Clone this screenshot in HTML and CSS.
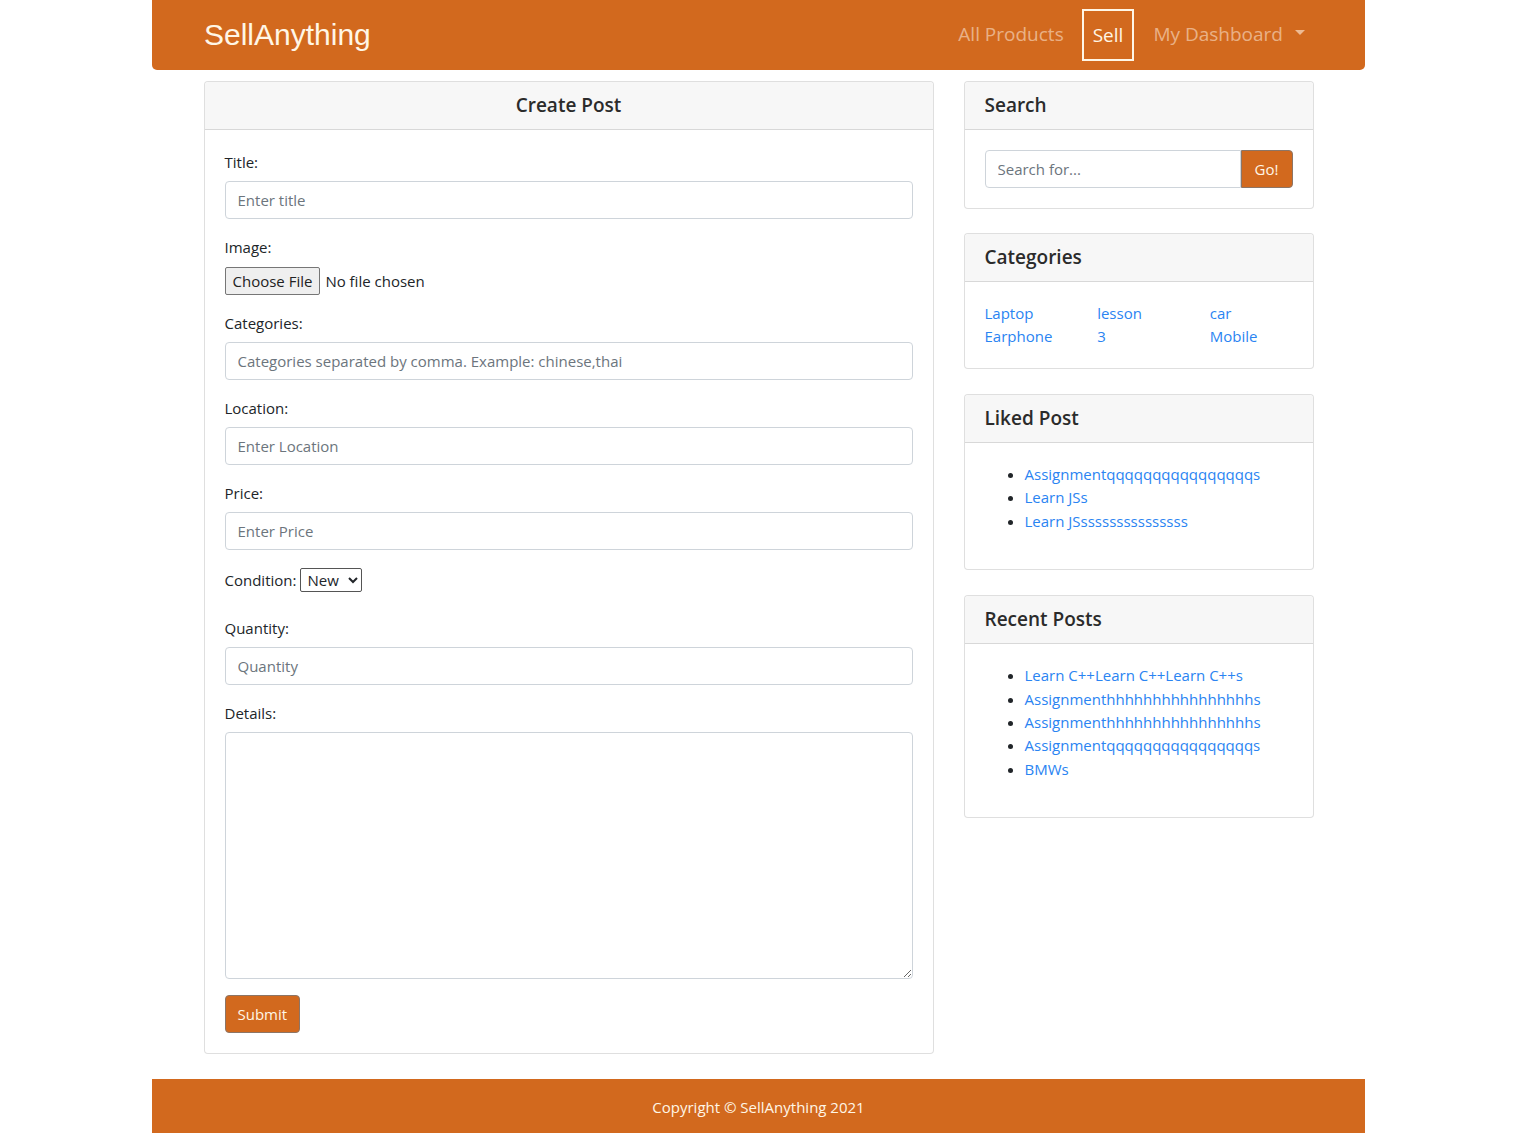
FILE: index.html
```html
<!DOCTYPE html>
<html lang="en">
<head>
<meta charset="utf-8">
<title>SellAnything - Create Post</title>
<link rel="stylesheet" href="styles.css">
</head>
<body>
<nav class="navbar">
  <a class="brand" href="#">SellAnything</a>
  <ul class="nav">
    <li><a class="nav-link" href="#">All Products</a></li>
    <li><a class="nav-link active" href="#">Sell</a></li>
    <li><a class="nav-link dropdown" href="#">My Dashboard <span class="caret"></span></a></li>
  </ul>
</nav>

<main class="container">
  <section class="col-main">
    <div class="card">
      <h5 class="card-header center">Create Post</h5>
      <form class="card-body">
        <div class="form-group">
          <label>Title:</label>
          <input class="form-control" type="text" placeholder="Enter title">
        </div>
        <div class="form-group">
          <label>Image:</label>
          <input class="form-file" type="file">
        </div>
        <div class="form-group">
          <label>Categories:</label>
          <input class="form-control" type="text" placeholder="Categories separated by comma. Example: chinese,thai">
        </div>
        <div class="form-group">
          <label>Location:</label>
          <input class="form-control" type="text" placeholder="Enter Location">
        </div>
        <div class="form-group">
          <label>Price:</label>
          <input class="form-control" type="text" placeholder="Enter Price">
        </div>
        <div class="form-group inline">
          <label>Condition:</label>
          <select class="select"><option>New</option><option>Used</option></select>
        </div>
        <div class="form-group">
          <label>Quantity:</label>
          <input class="form-control" type="text" placeholder="Quantity">
        </div>
        <div class="form-group">
          <label>Details:</label>
          <textarea class="form-control textarea"></textarea>
        </div>
        <button class="btn" type="button">Submit</button>
      </form>
    </div>
  </section>

  <aside class="col-side">
    <div class="card">
      <h5 class="card-header">Search</h5>
      <div class="card-body">
        <div class="input-group">
          <input class="form-control grow" type="text" placeholder="Search for...">
          <button class="btn go" type="button">Go!</button>
        </div>
      </div>
    </div>

    <div class="card">
      <h5 class="card-header">Categories</h5>
      <div class="card-body">
        <div class="cat-grid">
          <ul class="plain"><li><a href="#">Laptop</a></li><li><a href="#">Earphone</a></li></ul>
          <ul class="plain"><li><a href="#">lesson</a></li><li><a href="#">3</a></li></ul>
          <ul class="plain"><li><a href="#">car</a></li><li><a href="#">Mobile</a></li></ul>
        </div>
      </div>
    </div>

    <div class="card">
      <h5 class="card-header">Liked Post</h5>
      <div class="card-body">
        <ul class="bullets">
          <li><a href="#">Assignmentqqqqqqqqqqqqqqqqs</a></li>
          <li><a href="#">Learn JSs</a></li>
          <li><a href="#">Learn JSsssssssssssssss</a></li>
        </ul>
      </div>
    </div>

    <div class="card">
      <h5 class="card-header">Recent Posts</h5>
      <div class="card-body">
        <ul class="bullets">
          <li><a href="#">Learn C++Learn C++Learn C++s</a></li>
          <li><a href="#">Assignmenthhhhhhhhhhhhhhhhs</a></li>
          <li><a href="#">Assignmenthhhhhhhhhhhhhhhhs</a></li>
          <li><a href="#">Assignmentqqqqqqqqqqqqqqqqs</a></li>
          <li><a href="#">BMWs</a></li>
        </ul>
      </div>
    </div>
  </aside>
</main>

<footer class="footer">
  <p>Copyright &copy; SellAnything 2021</p>
</footer>
</body>
</html>
```

FILE: styles.css
```css
* { box-sizing: border-box; }
html, body { margin: 0; padding: 0; }
body {
  font-family: "Open Sans", "Noto Sans", sans-serif;
  font-size: 15px;
  line-height: 24px;
  color: #212529;
  background: #fff;
  height: 1133px;
  overflow: hidden;
}
a { color: #2a84f2; text-decoration: none; }

.navbar {
  width: 1213px;
  height: 70px;
  margin: 0 auto;
  background: #d2691e;
  border-radius: 0 0 5px 5px;
  display: flex;
  align-items: center;
  justify-content: space-between;
  padding: 0 51px 0 52px;
}
.brand {
  font-family: "Liberation Sans", Arial, sans-serif;
  font-size: 30px;
  color: #fff6e6;
  line-height: 36px;
  margin-top: -1px;
}
.nav { list-style: none; margin: 0; padding: 0; display: flex; align-items: center; margin-top: -3px; }
.nav-link {
  display: flex;
  align-items: center;
  font-size: 19px;
  color: rgba(255, 240, 225, 0.55);
  padding: 0 9px;
  height: 51px;
}
.nav-link.active {
  color: #fff6e6;
  border: 2px solid #fff6e6;
  margin: 2px 9px 0 9px;
  height: 52px;
}
.nav-link.dropdown { padding-left: 10px; }
.caret {
  display: inline-block;
  width: 0; height: 0;
  margin-left: 12px;
  border-top: 5px solid rgba(255, 240, 225, 0.6);
  border-left: 5px solid transparent;
  border-right: 5px solid transparent;
  margin-top: -3px;
}

.container {
  width: 1110px;
  margin: 11px auto 0;
  display: flex;
  gap: 30px;
  align-items: flex-start;
}
.col-main { width: 730px; flex: none; }
.col-side { width: 350px; flex: none; display: flex; flex-direction: column; gap: 24px; }
.col-side .card:nth-child(n+3) { margin-top: 1px; }

.card {
  border: 1px solid rgba(0, 0, 0, 0.125);
  border-radius: 4px;
  background: #fff;
}
.card-header {
  margin: 0;
  background: #f7f7f7;
  border-bottom: 1px solid rgba(0, 0, 0, 0.125);
  padding: 11px 20px 12px;
  font-size: 19px;
  font-weight: 600;
  line-height: 24px;
  border-radius: 4px 4px 0 0;
  color: #2b2b2b;
}
.card-header.center { text-align: center; }
.card-body { padding: 20px; display: block; }

.form-group { margin-bottom: 16px; }
.form-group label { display: block; margin-bottom: 7px; font-size: 15px; }
.form-group.inline { display: flex; align-items: center; gap: 4px; margin-top: 18px; margin-bottom: 24px; }
.form-group.inline label { display: inline; margin: 0; }

.form-control {
  display: block;
  width: 100%;
  height: 38px;
  padding: 6px 12px;
  font-family: inherit;
  font-size: 15px;
  color: #495057;
  border: 1px solid #ced4da;
  border-radius: 4px;
  background: #fff;
}
.form-control::placeholder { color: #6c757d; }
.textarea { height: 247px; resize: vertical; }
.form-file {
  font-family: inherit;
  font-size: 15px;
  display: block;
  height: 28px;
  line-height: 28px;
  margin-top: 8px;
}
.form-file::file-selector-button {
  font-family: inherit;
  font-size: 15px;
  height: 28px;
  padding: 0 7px;
  margin-right: 5px;
  background: #efefef;
  border: 1px solid #767676;
  border-radius: 2px;
  color: #222;
}
.select {
  font-family: inherit;
  font-size: 15px;
  height: 24px;
  padding: 0 2px;
  border: 1px solid #555;
  border-radius: 2px;
  background: #fff;
  color: #212529;
}

.btn {
  display: inline-block;
  background: #d2691e;
  color: #fff6e6;
  border: 1px solid #8c7566;
  border-radius: 4px;
  font-family: inherit;
  font-size: 15px;
  line-height: 24px;
  padding: 6px 12px;
  height: 38px;
  cursor: pointer;
}
.input-group { display: flex; }
.grow { flex: 1; border-radius: 4px 0 0 4px; }
.go { border-radius: 0 4px 4px 0; padding: 6px 13px; }

.cat-grid { display: grid; grid-template-columns: repeat(3, 1fr); margin: 0 -15px; }
.plain { list-style: none; margin: 0; padding: 0 15px; font-size: 15px; line-height: 23px; }
.bullets { margin: 0 0 16px; padding-left: 40px; font-size: 15px; line-height: 23.4px; }

.footer {
  width: 1213px;
  margin: 25px auto 0;
  background: #d2691e;
  padding: 16px 0 14px;
  text-align: center;
  color: #fff6e6;
}
.footer p { margin: 0; font-size: 15px; }
```
